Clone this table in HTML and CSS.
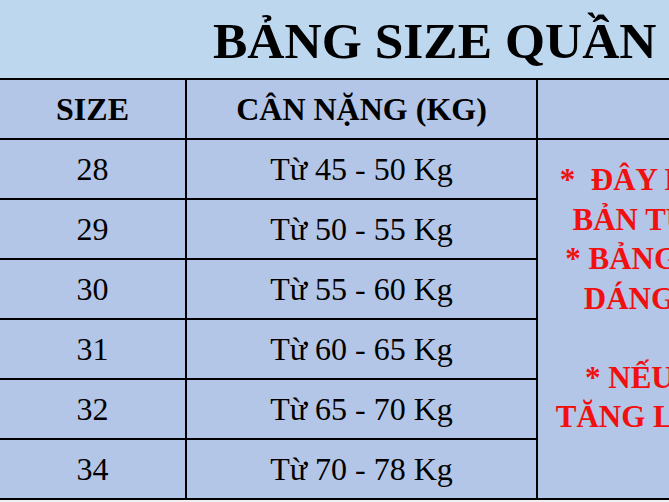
FILE: index.html
```html
<!DOCTYPE html>
<html lang="vi">
<head>
<meta charset="utf-8">
<title>Bảng size quần</title>
<link rel="stylesheet" href="styles.css">
</head>
<body>
<div class="page">
  <header class="banner">
    <h1 class="title">BẢNG SIZE QUẦN</h1>
  </header>
  <div class="sheet">
    <div class="cell head">SIZE</div>
    <div class="cell head">CÂN NẶNG (KG)</div>
    <div class="cell head"></div>

    <div class="cell">28</div>
    <div class="cell">Từ 45 - 50 Kg</div>
    <div class="note">
      <p class="note-line">*&nbsp; ĐÂY LÀ SIZE CƠ</p>
      <p class="note-line">BẢN TƯƠNG ĐỐI</p>
      <p class="note-line">* BẢNG SIZE CHO</p>
      <p class="note-line">DÁNG CÂN ĐỐI</p>
      <p class="note-line"></p>
      <p class="note-line">* NẾU HƠI BÉO</p>
      <p class="note-line">TĂNG LÊN 1-2 SIZE</p>
    </div>

    <div class="cell">29</div>
    <div class="cell">Từ 50 - 55 Kg</div>

    <div class="cell">30</div>
    <div class="cell">Từ 55 - 60 Kg</div>

    <div class="cell">31</div>
    <div class="cell">Từ 60 - 65 Kg</div>

    <div class="cell">32</div>
    <div class="cell">Từ 65 - 70 Kg</div>

    <div class="cell">34</div>
    <div class="cell">Từ 70 - 78 Kg</div>
  </div>
</div>
</body>
</html>
```

FILE: styles.css
```css
html, body {
  margin: 0;
  padding: 0;
  background: #eef0f1;
  overflow: hidden;
}

.page {
  width: 669px;
  height: 502px;
  overflow: hidden;
  font-family: "Liberation Serif", "Times New Roman", serif;
  color: #000;
}

.banner {
  height: 78px;
  background: #bdd7ee;
  display: flex;
  align-items: center;
  padding-left: 213px;
  padding-top: 2px;
  box-sizing: border-box;
  white-space: nowrap;
}

.title {
  margin: 0;
  font-size: 51.5px;
  font-weight: bold;
}

.sheet {
  display: grid;
  grid-template-columns: 185px 349px 324px;
  grid-template-rows: repeat(7, 58px);
  gap: 2px;
  padding: 2px 0;
  background: #000;
  width: max-content;
}

.cell {
  background: #b4c6e7;
  display: flex;
  align-items: center;
  justify-content: center;
  font-size: 32px;
  white-space: nowrap;
}

.head {
  font-weight: bold;
}

.note {
  grid-column: 3;
  grid-row: 2 / 8;
  background: #b4c6e7;
  padding-top: 20px;
  box-sizing: border-box;
  color: #f01010;
  font-weight: bold;
  font-size: 31px;
  text-align: center;
  white-space: nowrap;
}

.note-line {
  margin: 0;
  height: 39.5px;
  line-height: 39.5px;
}
```
